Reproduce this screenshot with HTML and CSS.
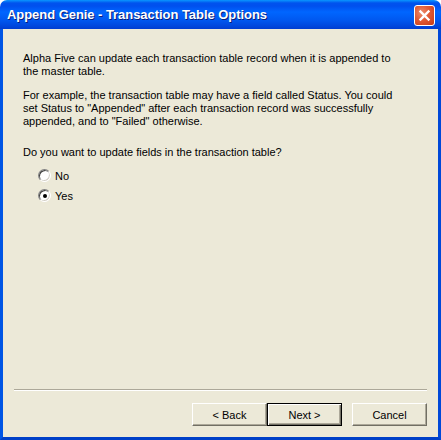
FILE: index.html
```html
<!DOCTYPE html>
<html>
<head>
<meta charset="utf-8">
<link rel="stylesheet" href="styles.css">
</head>
<body>
<div class="window">
  <div class="titlebar">
    <span class="title">Append Genie - Transaction Table Options</span>
    <span class="close">
      <svg width="19" height="19" viewBox="0 0 19 19">
        <path d="M5.5 5.5 L13.5 13.5 M13.5 5.5 L5.5 13.5" stroke="#fff" stroke-width="2.4" stroke-linecap="square"/>
      </svg>
    </span>
  </div>
  <div class="client">
    <div class="content">
      <p class="para">Alpha Five can update each transaction table record when it is appended to the master table.</p>
      <p class="para">For example, the transaction table may have a field called Status. You could set Status to "Appended" after each transaction record was successfully appended, and to "Failed" otherwise.</p>
      <p class="question">Do you want to update fields in the transaction table?</p>
      <div class="options">
        <div class="option"><span class="radio"></span><span>No</span></div>
        <div class="option"><span class="radio checked"></span><span>Yes</span></div>
      </div>
    </div>
    <div class="footer">
      <div class="separator"></div>
      <div class="buttons">
        <div class="group">
          <button class="btn">&lt; Back</button>
          <button class="btn default">Next &gt;</button>
        </div>
        <button class="btn">Cancel</button>
      </div>
    </div>
  </div>
</div>
</body>
</html>
```

FILE: styles.css
```css
html, body {
  margin: 0;
  padding: 0;
  background: #ffffff;
}
.window {
  width: 441px;
  height: 440px;
  display: flex;
  flex-direction: column;
  font-family: "Liberation Sans", Arial, sans-serif;
  font-size: 11px;
  color: #000;
}
.titlebar {
  height: 29px;
  box-sizing: border-box;
  border-radius: 7px 7px 0 0;
  background: linear-gradient(to bottom, #0997ff 0px, #0053ee 3px, #0050ee 6px, #0066ff 12px, #0058f0 20px, #0047dd 26px, #003dd0 29px);
  display: flex;
  align-items: center;
  justify-content: space-between;
  padding: 0 6px 0 7px;
}
.title {
  color: #fff;
  font-weight: bold;
  font-size: 13px;
  text-shadow: 1px 1px 0 #0a1e7a;
  letter-spacing: -0.05px;
}
.close {
  width: 21px;
  height: 21px;
  box-sizing: border-box;
  border: 1px solid #fff;
  border-radius: 3px;
  background: radial-gradient(circle at 35% 35%, #ed8d6c 0%, #e05a35 45%, #c53a15 100%);
  display: flex;
  margin-top: 2px;
}
.client {
  flex: 1;
  display: flex;
  flex-direction: column;
  background: #ece9d8;
  border-left: 3px solid #0055e5;
  border-right: 3px solid #0048d8;
  border-bottom: 3px solid #0040c8;
}
.content {
  flex: 1;
  padding: 23px 43px 0 20px;
}
.para {
  margin: 0 0 11px 0;
  line-height: 13px;
}
.question {
  margin: 18px 0 10px 0;
  line-height: 13px;
}
.options {
  display: flex;
  flex-direction: column;
  gap: 7px;
  padding-left: 15px;
}
.option {
  display: flex;
  align-items: center;
  gap: 4px;
  height: 13px;
}
.radio {
  width: 13px;
  height: 13px;
  box-sizing: border-box;
  border-radius: 50%;
  border: 1px solid;
  border-color: #808080 #ffffff #ffffff #808080;
  box-shadow: inset 1px 1px 0 #404040, inset -1px -1px 0 #d4d0c8;
  background: #fff;
  position: relative;
}
.radio.checked::after {
  content: "";
  position: absolute;
  left: 3.5px;
  top: 3.5px;
  width: 4px;
  height: 4px;
  border-radius: 50%;
  background: #000;
}
.footer {
  padding: 0 11px 11px 11px;
}
.separator {
  height: 1px;
  border-top: 1px solid #aca899;
  background: #fff;
  margin-bottom: 12px;
}
.buttons {
  display: flex;
  justify-content: flex-end;
  gap: 10px;
}
.group {
  display: flex;
  gap: 0;
}
.btn {
  width: 75px;
  height: 23px;
  box-sizing: border-box;
  font-family: "Liberation Sans", Arial, sans-serif;
  font-size: 11px;
  color: #000;
  background: #ece9d8;
  border: 1px solid;
  border-color: #ffffff #716f64 #716f64 #ffffff;
  box-shadow: inset -1px -1px 0 #aca899;
  padding: 0;
  margin: 0;
}
.btn.default {
  border: 1px solid #000;
  box-shadow: inset 1px 1px 0 #fff, inset -1px -1px 0 #716f64, inset -2px -2px 0 #aca899;
}
```
